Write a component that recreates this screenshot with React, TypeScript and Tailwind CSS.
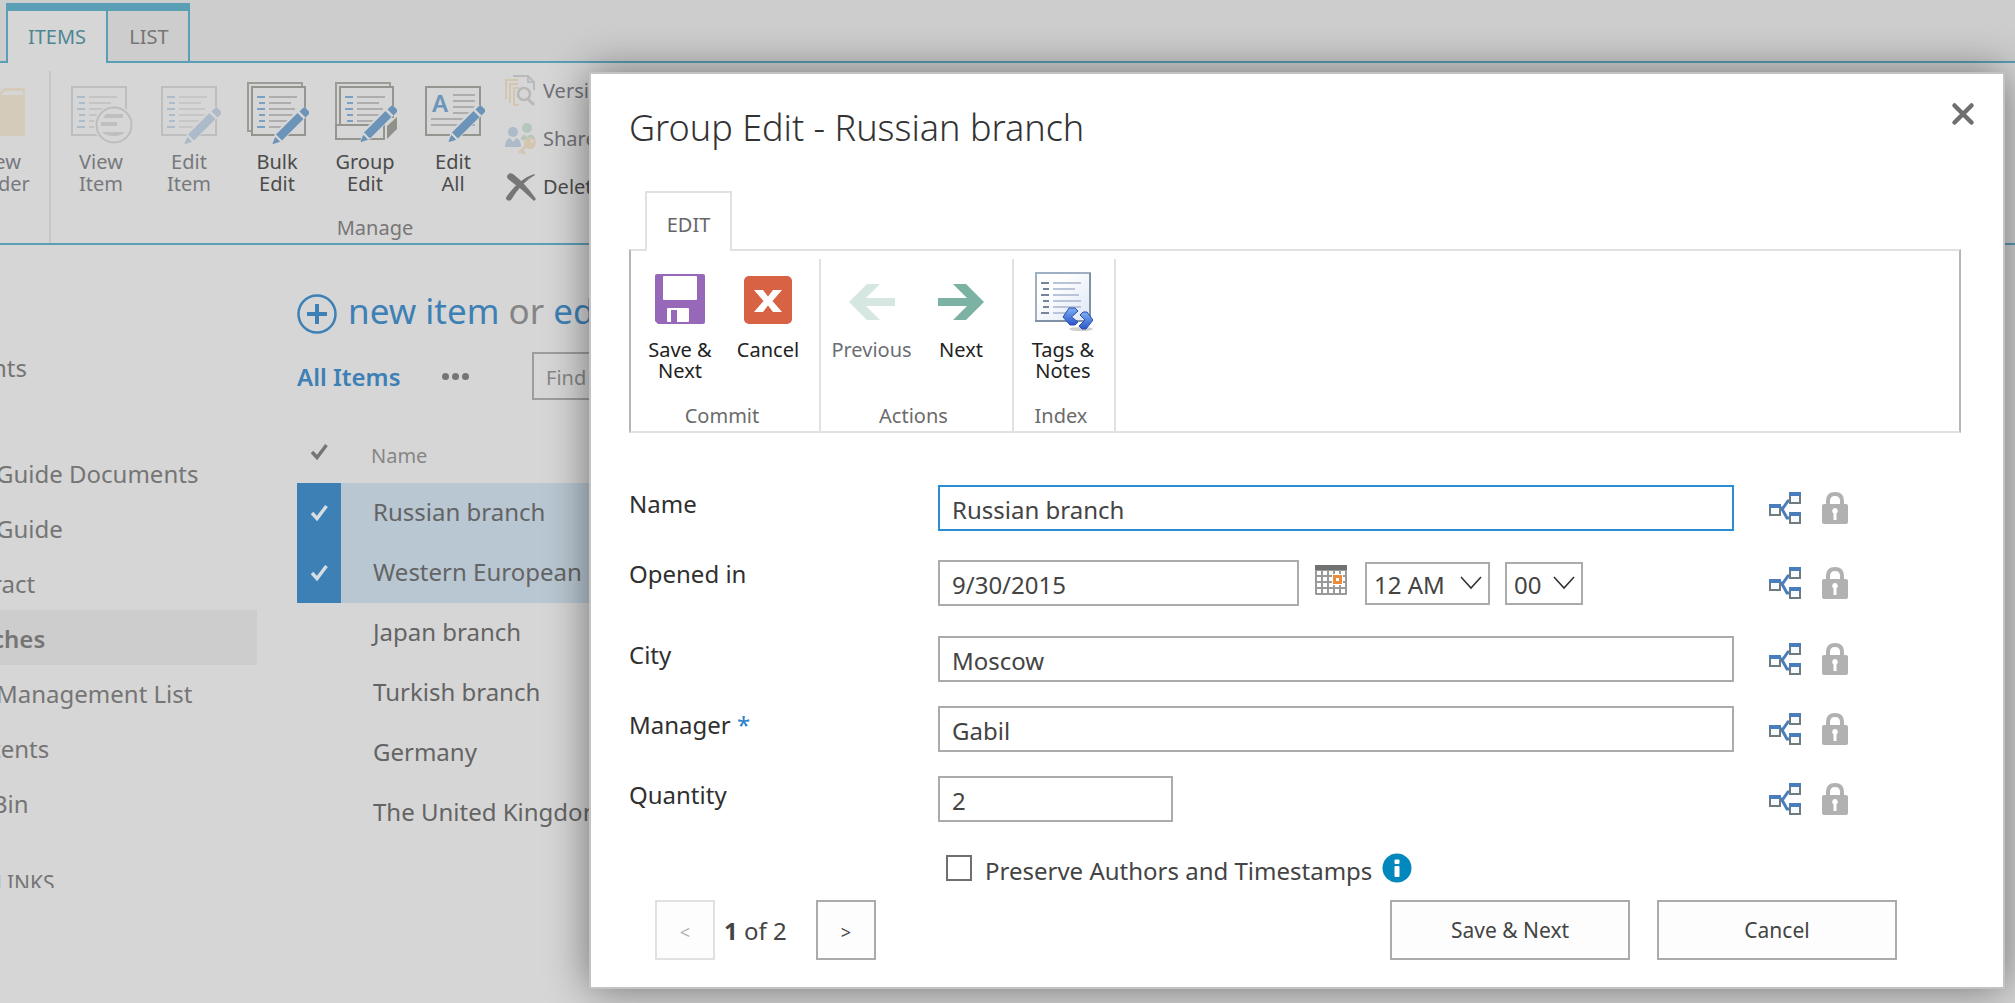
import React from "react";

const PAPER = "#d6d6d6";

function Rows({ blue, gray, x = 0, y = 0, count = 6 }: { blue: string; gray: string; x?: number; y?: number; count?: number }) {
  const marks = [8, 6, 8, 6, 6, 8].slice(0, count);
  const lines = [28, 22, 26, 28, 28, 22];
  return (
    <g transform={`translate(${x} ${y})`}>
      {marks.map((w, i) => (
        <g key={i}>
          <rect x={14 - w} y={14 + i * 6} width={w} height="2" fill={blue} />
          <rect x="18" y={14 + i * 6} width={lines[i]} height="2" fill={gray} />
        </g>
      ))}
    </g>
  );
}

function Pencil({ color, bottom = 61 }: { color: string; bottom?: number }) {
  return (
    <g transform={`translate(0 ${bottom - 61})`}>
      <path d="M25 62 L28 51 L54 24 L65 29 L36 59 Z" fill={PAPER} />
      <path d="M26 61.5 L28.5 55.5 L32.5 59.5 Z" fill={color} stroke={color} strokeLinejoin="round" />
      <path d="M29 52.5 L50.5 31 L56.5 37 L35 58.5 Z" fill={color} />
      <path d="M52.500 29.500 L56 26 Q57.5 25 59 26.5 L61.500 29 Q63 30.5 62 32 L58.500 35.5 Z" fill={color} />
    </g>
  );
}

function ViewItemIcon() {
  return (
    <svg width="64" height="64" viewBox="-2 0 64 64" aria-hidden="true">
      <rect x="1" y="5" width="54" height="48" fill="none" stroke="#bebebe" strokeWidth="2" />
      <Rows blue="#adbccb" gray="#c4c4c4" />
      <circle cx="43" cy="43" r="20" fill={PAPER} />
      <circle cx="43" cy="43" r="17.5" fill={PAPER} stroke="#bdbdbd" strokeWidth="2" />
      <path d="M35 32 H52 V36 H32 Z M30 40 H46 V44 H30 Z M31 50 H54 Q50 54 43 54 Q35 54 31 50 Z" fill="#bfbfbf" />
    </svg>
  );
}

function EditItemIcon() {
  return (
    <svg width="64" height="64" viewBox="-2 0 64 64" aria-hidden="true">
      <rect x="3" y="5" width="54" height="48" fill="none" stroke="#bebebe" strokeWidth="2" />
      <Rows blue="#adbccb" gray="#c6c6c6" x={2} />
      <Pencil color="#acbac9" />
    </svg>
  );
}

function BulkEditIcon() {
  return (
    <svg width="64" height="64" viewBox="-2 0 64 64" aria-hidden="true">
      <path d="M4 49 H1 V1 H55 V4" fill="none" stroke="#9b9c96" strokeWidth="2" />
      <rect x="5" y="5" width="53" height="48" fill="none" stroke="#94958f" strokeWidth="2" />
      <Rows blue="#7ba0c2" gray="#adadad" x={4} />
      <Pencil color="#6c94b9" />
    </svg>
  );
}

function GroupEditIcon() {
  return (
    <svg width="64" height="64" viewBox="-2 0 64 64" aria-hidden="true">
      <path d="M1 43 V1 H55 V4" fill="none" stroke="#9b9c96" strokeWidth="2" />
      <path d="M5 43 V5 H58 V36" fill="none" stroke="#94958f" strokeWidth="2" />
      <Rows blue="#7ba0c2" gray="#adadad" x={4} count={5} />
      <rect x="1" y="43" width="48" height="14" fill={PAPER} stroke="#94958f" strokeWidth="2" />
      <Pencil color="#6c94b9" bottom={59} />
      <path d="M52 44 L62 35 V47 L52 57 Z" fill="#8f918a" />
    </svg>
  );
}

function EditAllIcon() {
  return (
    <svg width="64" height="64" viewBox="-2 0 64 64" aria-hidden="true">
      <rect x="3" y="5" width="54" height="48" fill="none" stroke="#94958f" strokeWidth="2" />
      <text x="9" y="30" fontSize="24" fontWeight="600" fontFamily="Noto Sans, sans-serif" fill="#6c94b9">A</text>
      <path d="M30 13 H52 M30 19 H52 M30 25 H52 M30 31 H52 M8 37 H52 M8 43 H52" stroke="#adadad" strokeWidth="2" />
      <Pencil color="#6c94b9" bottom={59} />
    </svg>
  );
}

function FolderIcon() {
  return (
    <svg width="64" height="64" viewBox="-2 0 64 64" aria-hidden="true">
      <path d="M0 14 H26 L34 6 H54 Q55 6 55 8 V54 H0 Z" fill="#d5cbbb" />
      <path d="M35 9 H53 V13 H31 Z" fill={PAPER} />
    </svg>
  );
}

function VersionsIcon() {
  return (
    <svg width="32" height="32" viewBox="0 0 32 32" aria-hidden="true" fill="none">
      <path d="M1 24 V5 H13 M5 28 V9 H13 M9 30 V13 H14 M1 5 V22 M9 30 H14" stroke="#d3c5ae" strokeWidth="2" />
      <path d="M8 1 H23 L29 7 V15" stroke="#bababa" strokeWidth="2" />
      <path d="M23 1 V7 H29" stroke="#bababa" strokeWidth="2" />
      <circle cx="19" cy="19" r="6" stroke="#b8b8b8" strokeWidth="2.500" />
      <path d="M23 24 L29 30" stroke="#b8b8b8" strokeWidth="3" />
    </svg>
  );
}

function ShareIcon() {
  return (
    <svg width="32" height="32" viewBox="0 0 32 32" aria-hidden="true">
      <circle cx="22" cy="5" r="5" fill="#b5c6bd" />
      <path d="M16 15 Q18 11 20 12 L22 14 L24 12 Q28 11 30 15 V17 H16 Z" fill="#b5c6bd" />
      <circle cx="8" cy="9" r="5" fill="#acbac9" />
      <path d="M0 24 Q0 16 5 15 L8 19 L11 15 Q16 16 16 24 Z" fill="#acbac9" />
      <circle cx="25" cy="20" r="6" fill="#d3c6b0" />
      <circle cx="27" cy="18" r="1.5" fill={PAPER} />
      <path d="M22 22 L14 30 M16 27 L20 31" stroke="#d3c6b0" strokeWidth="3" />
    </svg>
  );
}

function DeleteIcon() {
  return (
    <svg width="32" height="32" viewBox="0 0 32 32" aria-hidden="true">
      <path d="M2 5 Q4 1 8 3 Q20 12 31 28 L29 30 Q17 18 3 8 Q2 7 2 5 Z" fill="#767676" />
      <path d="M30 4 Q17 11 6 29 Q3 31 1 28 Q1 26 2 25 Q14 8 29 3 Z" fill="#767676" />
    </svg>
  );
}

function Check({ color }: { color: string }) {
  return (
    <svg width="20" height="20" viewBox="0 0 20 20" aria-hidden="true">
      <path d="M3 10 L8 15.5 L17.5 3" fill="none" stroke={color} strokeWidth="3.4" />
    </svg>
  );
}

function SaveIcon() {
  return (
    <svg width="60" height="60" viewBox="0 0 60 60" aria-hidden="true">
      <path d="M7 3 H53 Q55 3 55 5 V51 Q55 53 53 53 H8 L5 50 V5 Q5 3 7 3 Z" fill="#9868b8" />
      <rect x="13" y="5" width="34" height="24" rx="1" fill="#fff" />
      <rect x="17" y="37" width="22" height="14" rx="1" fill="#fff" />
      <rect x="21" y="39" width="6" height="12" fill="#9868b8" />
    </svg>
  );
}

function CancelIcon() {
  return (
    <svg width="60" height="60" viewBox="0 0 60 60" aria-hidden="true">
      <rect x="6" y="5" width="48" height="48" rx="5" fill="#d86344" />
      <path d="M16 19 H25 L30 25.500 L35 19 H44 L34.500 30 L44 41 H35 L30 34.500 L25 41 H16 L25.500 30 Z" fill="#fff" />
    </svg>
  );
}

function ArrowIcon({ flip, color }: { flip?: boolean; color: string }) {
  return (
    <svg width="60" height="60" viewBox="0 0 60 60" aria-hidden="true">
      <path
        transform={flip ? "matrix(-1 0 0 1 60 0)" : undefined}
        d="M7 27 H36 L22 13 H35 L53 31 L35 49 H22 L36 35 H7 Z"
        fill={color}
      />
    </svg>
  );
}

function TagsIcon() {
  return (
    <svg width="60" height="60" viewBox="0 0 60 60" aria-hidden="true">
      <defs>
        <linearGradient id="tagSheet" x1="0" y1="0" x2="1" y2="1">
          <stop offset="0.3" stopColor="#ffffff" />
          <stop offset="1" stopColor="#dce6f5" />
        </linearGradient>
        <linearGradient id="tagMark" x1="0" y1="0" x2="0" y2="1">
          <stop offset="0" stopColor="#7db1f2" />
          <stop offset="1" stopColor="#2a55c8" />
        </linearGradient>
      </defs>
      <rect x="3" y="2" width="54" height="48" fill="url(#tagSheet)" stroke="#9fb0c4" strokeWidth="2" />
      <path d="M57 2 V51 M2 50 H58" stroke="#8191a6" strokeWidth="2" fill="none" />
      <Rows blue="#76859c" gray="#b9c4d8" x={2} y={-3} />
      <ellipse cx="48" cy="58" rx="12" ry="2" fill="#cfcfcf" />
      <path d="M36 37 H42 L45 40 L38.500 46 L45 51 L42 54 H37 L30 46 Z" fill="url(#tagMark)" stroke="#2b4db4" strokeLinejoin="round" />
      <path d="M47 44 L50 41 H54 L60 49 L53 58 H49 L46 55 L52 49 Z" fill="url(#tagMark)" stroke="#2b4db4" strokeLinejoin="round" />
    </svg>
  );
}

function TreeIcon() {
  return (
    <svg width="34" height="32" viewBox="0 0 34 32" aria-hidden="true">
      <path d="M12 16 H14 L19 9 H22 M13 17 L18 26 H22" fill="none" stroke="#4a7ebb" strokeWidth="3" />
      {[[0, 12], [20, 0], [20, 20]].map(([x, y]) => (
        <g key={`${x}-${y}`}>
          <rect x={x + 1} y={y + 2} width="10" height="9" fill="#f7fbfc" stroke="#6f7b80" strokeWidth="2" />
          <rect x={x} y={y} width="12" height="4" fill="#4a7ebb" />
        </g>
      ))}
    </svg>
  );
}

function LockIcon() {
  return (
    <svg width="26" height="32" viewBox="0 0 26 32" aria-hidden="true">
      <path d="M6 14 V9 Q6 2 13 2 Q20 2 20 9 V14" fill="none" stroke="#b1b1b1" strokeWidth="4" />
      <path d="M2 12 H24 Q26 12 26 14 V30 Q26 32 24 32 H2 Q0 32 0 30 V14 Q0 12 2 12 Z" fill="#b1b1b1" />
      <path d="M13 16 A3 3 0 0 1 14.500 21.500 V28 H11.500 V21.500 A3 3 0 0 1 13 16 Z" fill="#fff" />
    </svg>
  );
}

function CalendarIcon() {
  return (
    <svg width="34" height="32" viewBox="0 0 34 32" aria-hidden="true">
      <rect x="1" y="1" width="32" height="30" rx="1" fill="#9a9a9a" />
      <rect x="1" y="1" width="32" height="5" fill="#717171" />
      {[0, 1, 2, 3].map((r) =>
        [0, 1, 2, 3, 4].map((c) => <rect key={`${r}-${c}`} x={3 + c * 6} y={7 + r * 6} width="4" height="4" fill="#fff" />),
      )}
      <rect x="18" y="10" width="11" height="11" fill="#fff" />
      <rect x="20.500" y="12.500" width="6" height="6" fill="#fff" stroke="#ed8b3c" strokeWidth="3" />
    </svg>
  );
}

const bigButtons: { label: string; icon: React.ReactNode; off?: boolean }[] = [
  { label: "View Item", icon: <ViewItemIcon />, off: true },
  { label: "Edit Item", icon: <EditItemIcon />, off: true },
  { label: "Bulk Edit", icon: <BulkEditIcon /> },
  { label: "Group Edit", icon: <GroupEditIcon /> },
  { label: "Edit All", icon: <EditAllIcon /> },
];

function PageButton({ label, icon, off }: { label: string; icon: React.ReactNode; off?: boolean }) {
  const [first, second] = label.split(" ");
  return (
    <button type="button" className={`flex w-22 shrink-0 flex-col items-center gap-[5px] text-xl leading-[22px] ${off ? "text-[#77797d]" : "text-[#4b4b4b]"}`}>
      {icon}
      <span>
        {first}
        <br />
        {second}
      </span>
    </button>
  );
}

const navItems = [
  { text: "nts", cut: true },
  { text: "Guide Documents", gap: true },
  { text: "Guide" },
  { text: "ract", cut: true },
  { text: "ches", cut: true, current: true },
  { text: "Management List" },
  { text: "tents", cut: true },
  { text: "Bin", cut: true },
];

const listRows = [
  { name: "Russian branch", selected: true },
  { name: "Western European branch", selected: true },
  { name: "Japan branch" },
  { name: "Turkish branch" },
  { name: "Germany" },
  { name: "The United Kingdom" },
];

function Page() {
  return (
    <div className="min-h-screen overflow-hidden bg-[#d6d6d6]">
      <div className="flex h-[63px] border-b-2 border-[#5a9fb5] bg-[#cdcdcd] pt-[3px] pl-[6px] text-xl">
        <div className="-mb-[2px] flex border-x-2 border-t-8 border-[#5a9fb5]">
          <button type="button" className="w-[100px] border-r-2 border-[#5a9fb5] bg-[#d6d6d6] text-[#4d8794]">ITEMS</button>
          <button type="button" className="mb-[2px] w-[80px] pt-0.5 pl-0.5 text-[#757575]">LIST</button>
        </div>
      </div>

      <div className="flex h-[182px] border-b-2 border-[#5a9fb5]">
        <div className="-ml-11 flex pt-[19px]">
          <PageButton label="New Folder" icon={<FolderIcon />} off />
        </div>
        <div className="ml-[5px] mt-2 w-0.5 bg-[#c6c6c6]" />
        <div className="flex w-[648px] flex-col justify-between">
          <div className="flex pl-[6px]">
            <div className="flex pt-[19px]">
              {bigButtons.map((b) => (
                <PageButton key={b.label} {...b} />
              ))}
            </div>
            <div className="ml-2 flex flex-col pt-1 text-xl whitespace-nowrap">
              <button type="button" className="flex h-12 items-center gap-1.5 text-[#707276]"><VersionsIcon />Version History</button>
              <button type="button" className="flex h-12 items-center gap-1.5 text-[#707276]"><ShareIcon />Shared With</button>
              <button type="button" className="flex h-12 items-center gap-1.5 text-[#4b4b4b]"><DeleteIcon />Delete Item</button>
            </div>
          </div>
          <div className="-mt-[30px] text-center text-xl leading-[30px] text-[#777]">Manage</div>
        </div>
      </div>

      <div className="flex">
        <nav className="w-[257px] shrink-0 overflow-hidden pt-[94px] text-2xl text-[#757575]">
          {navItems.map((n) => (
            <a
              key={n.text}
              href="#"
              className={`flex h-[55px] items-center pt-[3px] whitespace-nowrap ${n.gap ? "mt-[51px]" : ""} ${n.current ? "bg-[#cdcdcd] font-semibold" : ""}`}
            >
              <span className={n.cut ? "-ml-2" : "-ml-1"}>{n.text}</span>
            </a>
          ))}
          <a href="#" className="mt-[38px] block h-5 overflow-hidden text-[21px] leading-[30px]">
            <span className="-ml-1">LINKS</span>
          </a>
        </nav>

        <main className="ml-10 flex-1 pt-[49px] pr-10">
          <div className="flex h-10 items-center gap-[11px] text-[35px] leading-10 whitespace-nowrap text-[#858585]">
            <svg width="40" height="40" viewBox="0 0 40 40" aria-hidden="true" fill="none" stroke="#3d80b5">
              <circle cx="20" cy="20" r="18.500" strokeWidth="2.500" />
              <path d="M10 20 H30 M20 10 V30" strokeWidth="4" />
            </svg>
            <p className="-mt-1.5">
              <a href="#" className="text-[#3d80b5]">new item</a> or <a href="#" className="text-[#3d80b5]">edit this list</a>
            </p>
          </div>

          <div className="mt-[18px] flex h-12 items-center">
            <a href="#" className="w-[145px] pt-0.5 text-2xl font-semibold text-[#3d80b5]">All Items</a>
            <button type="button" aria-label="More views" className="flex w-[90px] gap-[3px]">
              <span className="size-[7px] rounded-full bg-[#757575]" />
              <span className="size-[7px] rounded-full bg-[#757575]" />
              <span className="size-[7px] rounded-full bg-[#757575]" />
            </button>
            <input aria-label="Find an item" placeholder="Find an item" className="h-12 w-[400px] border-2 border-[#9d9d9d] px-3 pt-0.5 text-xl outline-none placeholder:text-[#868686]" />
          </div>

          <table className="mt-[27px] w-full text-left">
            <thead>
              <tr className="h-14">
                <th className="w-11 pb-1.5">
                  <div className="flex justify-center"><Check color="#757575" /></div>
                </th>
                <th className="pt-0.5 pl-[30px] text-xl font-normal text-[#868686]">Name</th>
              </tr>
            </thead>
            <tbody>
              {listRows.map((r) => (
                <tr key={r.name} className={`h-15 ${r.selected ? "bg-[#b9c7d2]" : ""}`}>
                  <td className={r.selected ? "bg-[#3d80b5]" : ""}>
                    {r.selected && <div className="flex justify-center"><Check color="#d6dde3" /></div>}
                  </td>
                  <td className="pb-0.5 pl-8 text-2xl whitespace-nowrap text-[#646464]">{r.name}</td>
                </tr>
              ))}
            </tbody>
          </table>
        </main>
      </div>
    </div>
  );
}

function DialogButton({ label, icon, off, wide }: { label: string; icon: React.ReactNode; off?: boolean; wide?: boolean }) {
  return (
    <button
      type="button"
      disabled={off}
      className={`flex flex-col items-center gap-2 text-xl leading-[21px] ${wide ? "w-[91px]" : "w-22"} ${off ? "text-[#6b6e73]" : "text-[#222]"}`}
    >
      {icon}
      {label}
    </button>
  );
}

function RibbonGroup({ title, children }: { title: string; children: React.ReactNode }) {
  return (
    <div className="mt-2 flex flex-col justify-between border-r-2 border-[#e1e1e1] pt-3 pr-[7px] pb-px pl-[5px]">
      <div className="flex items-start">{children}</div>
      <div className="pr-1 text-center text-xl leading-7 text-[#6b6b6b]">{title}</div>
    </div>
  );
}

const inputClass = "h-[46px] border-2 bg-white px-3 pt-[3px] text-2xl text-[#444] outline-none";

function Field({ id, label, required, children, tall }: { id: string; label: string; required?: boolean; children: React.ReactNode; tall?: boolean }) {
  return (
    <div className={`mb-6 flex items-start ${tall ? "pb-1.5" : ""}`}>
      <label htmlFor={id} className="w-[309px] shrink-0 pt-[5px] text-2xl leading-7 text-[#303030]">
        {label}
        {required && <span className="text-[#2a7fc9]"> *</span>}
      </label>
      <div className={`flex flex-1 items-start ${tall ? "pt-[5px]" : ""}`}>
        <div className="flex flex-1 items-start">{children}</div>
        <button type="button" aria-label={`${label} inheritance`} className="mt-[7px] ml-[35px]"><TreeIcon /></button>
        <button type="button" aria-label={`Lock ${label}`} className="mt-[7px] mr-[113px] ml-[19px]"><LockIcon /></button>
      </div>
    </div>
  );
}

function Select({ label, value, width }: { label: string; value: string; width: string }) {
  return (
    <div className={`relative mt-0.5 ${width}`}>
      <select aria-label={label} defaultValue={value} className="h-[43px] w-full appearance-none border-2 border-[#ababab] bg-white pt-0.5 pl-[7px] text-2xl leading-8 text-[#444]">
        <option>{value}</option>
      </select>
      <svg className="pointer-events-none absolute top-[14px] right-2" width="22" height="14" viewBox="0 0 22 14" fill="none" stroke="#333" strokeWidth="1.600" aria-hidden="true">
        <path d="M1 1 L11 12 L21 1" />
      </svg>
    </div>
  );
}

function GroupEditDialog() {
  return (
    <div
      role="dialog"
      aria-labelledby="dialog-title"
      className="absolute top-[72px] right-[10px] left-[589px] border-2 border-[#c3c3c3] bg-white pt-8 pr-[42px] pb-[27px] pl-[38px] shadow-[0_0_40px_rgba(0,0,0,0.48)]"
    >
      <div className="flex justify-between">
        <h1 id="dialog-title" className="text-4xl leading-11 font-light text-[#333]">Group Edit - Russian branch</h1>
        <button type="button" aria-label="Close" className="-mt-[5px] -mr-[15px] size-[26px]">
          <svg width="26" height="26" viewBox="0 0 26 26" aria-hidden="true">
            <path d="M4.500 4.500 L21.500 21.500 M21.500 4.500 L4.500 21.500" stroke="#6f6f6f" strokeWidth="4.500" strokeLinecap="round" />
          </svg>
        </button>
      </div>

      <div className="relative mt-[41px] -mb-[2px] ml-4 flex h-15 w-[87px] items-center justify-center border-x-2 border-t-2 border-[#e1e1e1] bg-white pt-1.5 text-xl text-[#666]">
        EDIT
      </div>
      <div className="flex h-[184px] border-2 border-x-[#b3b7bc] border-y-[#e1e1e1]">
        <RibbonGroup title="Commit">
          <DialogButton label="Save & Next" icon={<SaveIcon />} />
          <DialogButton label="Cancel" icon={<CancelIcon />} />
        </RibbonGroup>
        <RibbonGroup title="Actions">
          <DialogButton label="Previous" icon={<ArrowIcon flip color="#d6e6e1" />} off wide />
          <DialogButton label="Next" icon={<ArrowIcon color="#7cb2a3" />} />
        </RibbonGroup>
        <RibbonGroup title="Index">
          <DialogButton label="Tags & Notes" icon={<TagsIcon />} />
        </RibbonGroup>
      </div>

      <form className="mt-[52px]" onSubmit={(e) => e.preventDefault()}>
        <Field id="name" label="Name">
          <input id="name" defaultValue="Russian branch" className={`${inputClass} w-full border-[#2a8dd4]`} />
        </Field>
        <Field id="opened" label="Opened in" tall>
          <input id="opened" defaultValue="9/30/2015" className={`${inputClass} w-[361px] border-[#ababab]`} />
          <button type="button" aria-label="Pick a date" className="mt-1 mr-[17px] ml-[15px]"><CalendarIcon /></button>
          <Select label="Hour" value="12 AM" width="w-[125px]" />
          <div className="w-[15px]" />
          <Select label="Minute" value="00" width="w-[78px]" />
        </Field>
        <Field id="city" label="City">
          <input id="city" defaultValue="Moscow" className={`${inputClass} w-full border-[#ababab]`} />
        </Field>
        <Field id="manager" label="Manager" required>
          <input id="manager" defaultValue="Gabil" className={`${inputClass} w-full border-[#ababab]`} />
        </Field>
        <Field id="quantity" label="Quantity">
          <input id="quantity" defaultValue="2" className={`${inputClass} w-[235px] border-[#ababab]`} />
        </Field>

        <div className="mt-[26px] ml-[317px] flex h-10 items-center">
          <input id="preserve" type="checkbox" className="size-[26px] appearance-none border-2 border-[#6f6f6f] bg-white checked:bg-[#6f6f6f]" />
          <label htmlFor="preserve" className="pt-1.5 pl-[13px] text-2xl leading-7 text-[#444]">Preserve Authors and Timestamps</label>
          <svg className="ml-2.5" width="30" height="30" viewBox="0 0 30 30" role="img" aria-label="Information">
            <circle cx="15" cy="15" r="14.500" fill="#0388bd" />
            <rect x="12.500" y="6.500" width="5" height="4.500" rx="1" fill="#fff" />
            <rect x="12.500" y="13" width="5" height="11" rx="1" fill="#fff" />
          </svg>
        </div>

        <div className="mt-3 flex items-center pr-16 pl-[26px] text-[21px] text-[#444]">
          <button type="button" disabled aria-label="Previous item" className="size-15 border-2 border-[#e1e1e1] bg-[#fdfdfd] pt-1 text-lg text-[#b1b1b1]">&lt;</button>
          <p className="w-[101px] pt-0.5 pl-[9px] text-2xl"><b>1</b> of 2</p>
          <button type="button" aria-label="Next item" className="size-15 border-2 border-[#ababab] bg-[#fdfdfd] pt-1 text-lg">&gt;</button>
          <button type="submit" className="ml-auto h-15 w-60 border-2 border-[#ababab] bg-[#fdfdfd] pt-0.5">Save &amp; Next</button>
          <button type="button" className="ml-[27px] h-15 w-60 border-2 border-[#ababab] bg-[#fdfdfd] pt-0.5">Cancel</button>
        </div>
      </form>
    </div>
  );
}

export default function App() {
  return (
    <div className="relative min-h-screen overflow-hidden font-['Noto_Sans','Open_Sans',sans-serif]">
      <Page />
      <GroupEditDialog />
    </div>
  );
}
